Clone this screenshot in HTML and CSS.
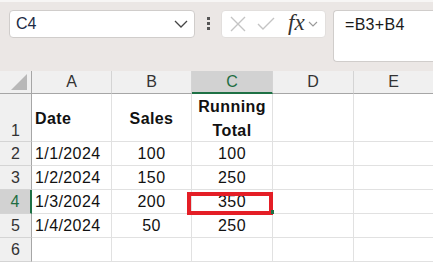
FILE: index.html
```html
<!DOCTYPE html>
<html lang="en">
<head>
    <meta charset="UTF-8">
    <title>Running Total</title>
    <link rel="stylesheet" href="styles.css">
</head>
<body>
    <!-- Formula bar -->
    <div class="bar">
        <div class="namebox">
            <span>C4</span>
            <svg width="14" height="8" viewBox="0 0 14 8"><path d="M1 1 L7 7 L13 1" fill="none" stroke="#444" stroke-width="1.3"/></svg>
        </div>
        <div class="dots"><i></i><i></i><i></i></div>
        <div class="tools">
            <svg width="18" height="18" viewBox="0 0 18 18"><path d="M2 2 L16 16 M16 2 L2 16" stroke="#c4c4c4" stroke-width="1.4"/></svg>
            <svg width="18" height="18" viewBox="0 0 18 18"><path d="M1 9 L6 14 L17 3" fill="none" stroke="#c4c4c4" stroke-width="1.4"/></svg>
            <span class="fx">fx</span>
            <svg width="10" height="6" viewBox="0 0 10 6"><path d="M1 1 L5 5 L9 1" fill="none" stroke="#999" stroke-width="1.1"/></svg>
        </div>
        <div class="formula">=B3+B4</div>
    </div>

    <!-- Sheet grid -->
    <div class="sheet">
        <div class="hd corner"><svg width="16" height="16" viewBox="0 0 16 16"><path d="M16 0 L16 16 L0 16 Z" fill="#b8b8b8"/></svg></div>
        <div class="hd col">A</div>
        <div class="hd col">B</div>
        <div class="hd col active-col">C</div>
        <div class="hd col">D</div>
        <div class="hd col">E</div>

        <div class="hd row tall">1</div>
        <div class="cell tall bold">Date</div>
        <div class="cell tall bold center">Sales</div>
        <div class="cell tall bold center">Running<br>Total</div>
        <div class="cell tall"></div>
        <div class="cell tall"></div>

        <div class="hd row">2</div>
        <div class="cell">1/1/2024</div>
        <div class="cell center">100</div>
        <div class="cell center">100</div>
        <div class="cell"></div>
        <div class="cell"></div>

        <div class="hd row">3</div>
        <div class="cell">1/2/2024</div>
        <div class="cell center">150</div>
        <div class="cell center">250</div>
        <div class="cell"></div>
        <div class="cell"></div>

        <div class="hd row active-row">4</div>
        <div class="cell">1/3/2024</div>
        <div class="cell center">200</div>
        <div class="cell center selected">350<span class="mark"></span><span class="handle"></span></div>
        <div class="cell"></div>
        <div class="cell"></div>

        <div class="hd row">5</div>
        <div class="cell">1/4/2024</div>
        <div class="cell center">50</div>
        <div class="cell center">250</div>
        <div class="cell"></div>
        <div class="cell"></div>

        <div class="hd row">6</div>
        <div class="cell"></div>
        <div class="cell"></div>
        <div class="cell"></div>
        <div class="cell"></div>
        <div class="cell"></div>
    </div>
</body>
</html>
```

FILE: styles.css
```css
body {
    margin: 0;
    padding: 0;
    background-color: #ebe7e5;
    font-family: 'Liberation Sans', Arial, sans-serif;
    color: #1a1a1a;
    overflow: hidden;
}

/* Formula bar */
.bar {
    height: 71px;
    box-sizing: border-box;
    padding: 10px 0 0 9px;
    display: flex;
    align-items: flex-start;
    border-top: 2px solid #f7f6f5;
}

.namebox {
    width: 186px;
    height: 28px;
    box-sizing: border-box;
    margin-top: -2px;
    background: #fff;
    border: 1px solid #d0cdcb;
    border-radius: 4px;
    display: flex;
    align-items: center;
    justify-content: space-between;
    padding: 0 6px 0 6px;
    font-size: 16px;
    color: #1c2a44;
}

.dots {
    width: 26px;
    height: 26px;
    margin-top: -2px;
    display: flex;
    flex-direction: column;
    align-items: center;
    justify-content: center;
    gap: 2px;
}

.dots i {
    width: 3px;
    height: 3px;
    background: #555;
}

.tools {
    width: 105px;
    height: 28px;
    box-sizing: border-box;
    margin-top: -2px;
    background: #fff;
    border: 1px solid #e2dfdd;
    border-radius: 4px;
    display: flex;
    align-items: center;
    padding: 0 6px 0 7px;
    gap: 10px;
}

.fx {
    font-family: 'Liberation Serif', 'Times New Roman', serif;
    font-style: italic;
    font-size: 23px;
    color: #333;
    margin-left: 3px;
    margin-right: -7px;
    line-height: 1;
    margin-top: -3px;
}

.formula {
    flex: 1;
    height: 52px;
    box-sizing: border-box;
    margin: -2px 0 0 7px;
    background: #fff;
    border: 1px solid #d0cdcb;
    border-right: none;
    border-radius: 4px 0 0 4px;
    padding: 5px 0 0 11px;
    font-size: 16px;
    letter-spacing: 0.3px;
    color: #1a1a1a;
}

/* Sheet */
.sheet {
    display: grid;
    grid-template-columns: 32px 80px 80px 81px 81px 80px;
    grid-template-rows: 23px 48px repeat(5, 24px);
    background: #fff;
}

.hd {
    background: #f0f0f0;
    color: #333;
    font-size: 16px;
    display: flex;
    align-items: center;
    justify-content: center;
    box-sizing: border-box;
}

.corner {
    border-right: 1px solid #a6a6a6;
    border-bottom: 1px solid #a6a6a6;
    justify-content: flex-end;
    align-items: flex-end;
    padding: 0 4px 3px 0;
}

.col {
    border-right: 1px solid #d4d4d4;
    border-bottom: 1px solid #a6a6a6;
}

.row {
    border-right: 1px solid #a6a6a6;
    border-bottom: 1px solid #d4d4d4;
    padding-top: 1px;
}

.row.tall {
    align-items: flex-end;
    padding-bottom: 1px;
}

.active-col {
    background: #d2d2d2;
    color: #1e6e42;
    border-bottom: 2px solid #1e7145;
}

.active-row {
    background: #d2d2d2;
    color: #1e6e42;
    border-right: 2px solid #1e7145;
}

.cell {
    border-right: 1px solid #e1e1e1;
    border-bottom: 1px solid #e1e1e1;
    box-sizing: border-box;
    font-size: 16px;
    letter-spacing: 0.4px;
    padding: 1px 3px 0 3px;
    display: flex;
    align-items: center;
    white-space: nowrap;
    color: #111;
}

.cell.center {
    justify-content: center;
    text-align: center;
}

.cell.bold {
    font-weight: bold;
}

.cell.tall {
    line-height: 24px;
    padding-top: 3px;
}

.selected {
    position: relative;
}

.mark {
    position: absolute;
    left: -5px;
    top: 2px;
    width: 86px;
    height: 23px;
    box-sizing: border-box;
    border: 4px solid #e41e26;
}

.handle {
    position: absolute;
    right: -2px;
    bottom: -1px;
    width: 3px;
    height: 4px;
    background: #1e7145;
}
```
